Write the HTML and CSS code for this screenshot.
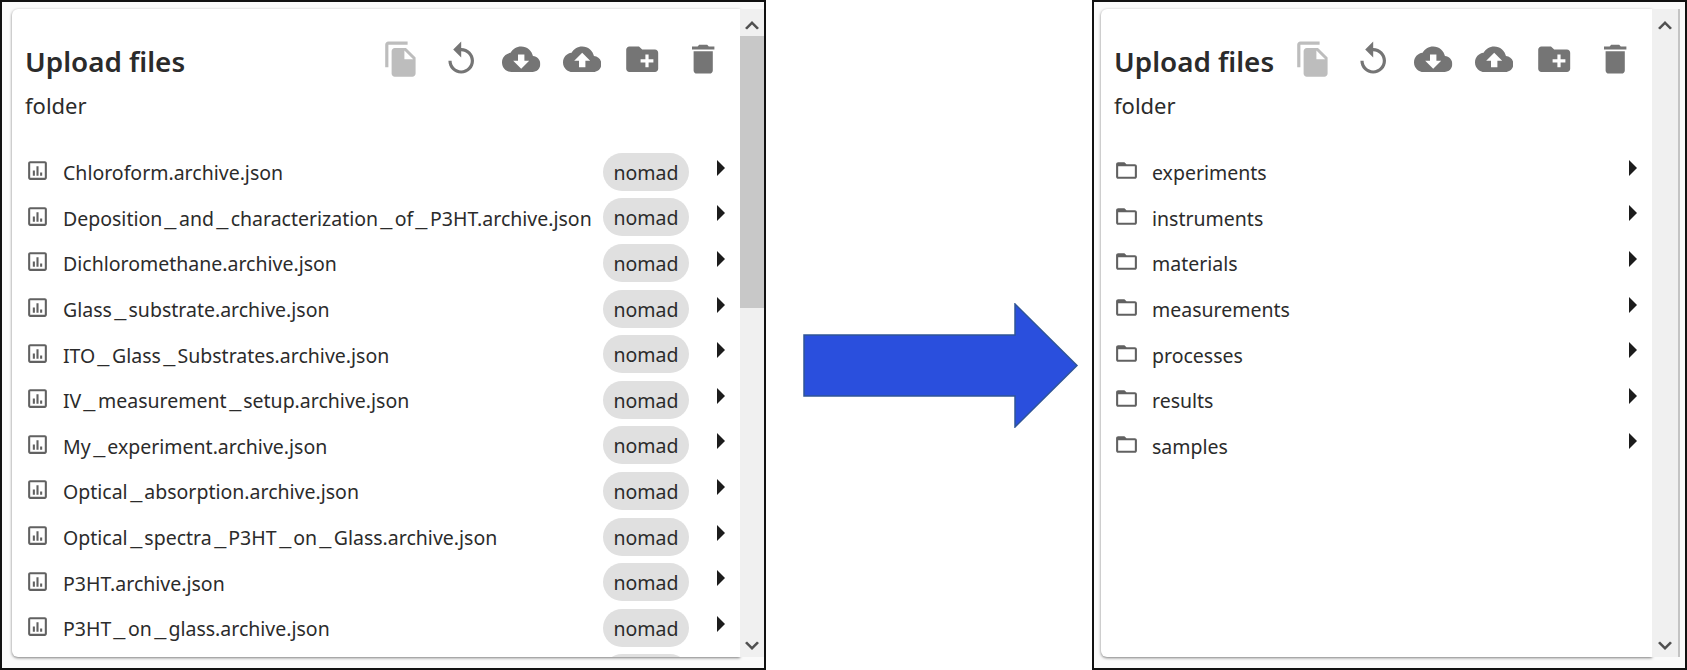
FILE: index.html
```html
<!DOCTYPE html>
<html lang="en">

<head>
    <meta charset="UTF-8">
    <title>Upload files</title>
    <link rel="stylesheet" href="styles.css">
</head>
<body>
    <svg class="sprites" width="0" height="0">
        <symbol id="i-copy" viewBox="0 0 24 24"><path d="M16 1H4c-1.1 0-2 .9-2 2v14h2V3h12V1zm-1 4l6 6v10c0 1.1-.9 2-2 2H7.99C6.89 23 6 22.1 6 21l.01-14c0-1.1.89-2 1.99-2h7zm-1 7h5.5L14 6.5V12z"/></symbol>
        <symbol id="i-replay" viewBox="0 0 24 24"><path d="M12 5V1L7 6l5 5V7c3.31 0 6 2.69 6 6s-2.69 6-6 6-6-2.69-6-6H4c0 4.42 3.58 8 8 8s8-3.58 8-8-3.58-8-8-8z"/></symbol>
        <symbol id="i-download" viewBox="0 0 24 24"><path d="M19.35 10.04C18.67 6.59 15.64 4 12 4 9.11 4 6.6 5.64 5.35 8.04 2.34 8.36 0 10.91 0 14c0 3.31 2.69 6 6 6h13c2.76 0 5-2.24 5-5 0-2.64-2.05-4.78-4.65-4.96zM17 13l-5 5-5-5h3V9h4v4h3z"/></symbol>
        <symbol id="i-upload" viewBox="0 0 24 24"><path d="M19.35 10.04C18.67 6.59 15.64 4 12 4 9.11 4 6.6 5.64 5.35 8.04 2.34 8.36 0 10.91 0 14c0 3.31 2.69 6 6 6h13c2.76 0 5-2.24 5-5 0-2.64-2.05-4.78-4.65-4.96zM14 13v4h-4v-4H7l5-5 5 5h-3z"/></symbol>
        <symbol id="i-newfolder" viewBox="0 0 24 24"><path d="M20 6h-8l-2-2H4c-1.11 0-1.99.89-1.99 2L2 18c0 1.11.89 2 2 2h16c1.11 0 2-.89 2-2V8c0-1.11-.89-2-2-2zm-1 8h-3v3h-2v-3h-3v-2h3V9h2v3h3v2z"/></symbol>
        <symbol id="i-delete" viewBox="0 0 24 24"><path d="M6 19c0 1.1.9 2 2 2h8c1.1 0 2-.9 2-2V7H6v12zM19 4h-3.5l-1-1h-5l-1 1H5v2h14V4z"/></symbol>
        <symbol id="i-chart" viewBox="0 0 24 24"><path d="M19 3H5c-1.1 0-2 .9-2 2v14c0 1.1.9 2 2 2h14c1.1 0 2-.9 2-2V5c0-1.1-.9-2-2-2zm0 16H5V5h14v14zM7.5 12h2v5h-2zM11 8h2v9h-2zM14.5 14h2v3h-2z"/></symbol>
        <symbol id="i-folder" viewBox="0 0 24 24"><path d="M20 6h-8l-2-2H4c-1.1 0-1.99.9-1.99 2L2 18c0 1.1.9 2 2 2h16c1.1 0 2-.9 2-2V8c0-1.1-.9-2-2-2zm0 12H4V8h16v10z"/></symbol>
        <symbol id="i-arrow" viewBox="0 0 8 16"><path d="M0 0l8 8-8 8z"/></symbol>
        <symbol id="i-up" viewBox="0 0 16 12"><path d="M1 9l7-7 7 7-2 1.5-5-5-5 5z"/></symbol>
        <symbol id="i-down" viewBox="0 0 16 12"><path d="M1 3l7 7 7-7-2-1.5-5 5-5-5z"/></symbol>
    </svg>

    <div class="frame frame-left">
        <div class="card">
            <div class="head">
                <h1>Upload files</h1>
                <div class="actions">
                    <svg class="action off"><use href="#i-copy"/></svg>
                    <svg class="action"><use href="#i-replay"/></svg>
                    <svg class="action"><use href="#i-download"/></svg>
                    <svg class="action"><use href="#i-upload"/></svg>
                    <svg class="action"><use href="#i-newfolder"/></svg>
                    <svg class="action"><use href="#i-delete"/></svg>
                </div>
            </div>
            <p class="path">folder</p>
            <ul class="list">
                <li class="row"><svg class="icon"><use href="#i-chart"/></svg><span class="name">Chloroform.archive.json</span><span class="chip">nomad</span><svg class="caret"><use href="#i-arrow"/></svg></li>
                <li class="row"><svg class="icon"><use href="#i-chart"/></svg><span class="name">Deposition<span class="us">_</span>and<span class="us">_</span>characterization<span class="us">_</span>of<span class="us">_</span>P3HT.archive.json</span><span class="chip">nomad</span><svg class="caret"><use href="#i-arrow"/></svg></li>
                <li class="row"><svg class="icon"><use href="#i-chart"/></svg><span class="name">Dichloromethane.archive.json</span><span class="chip">nomad</span><svg class="caret"><use href="#i-arrow"/></svg></li>
                <li class="row"><svg class="icon"><use href="#i-chart"/></svg><span class="name">Glass<span class="us">_</span>substrate.archive.json</span><span class="chip">nomad</span><svg class="caret"><use href="#i-arrow"/></svg></li>
                <li class="row"><svg class="icon"><use href="#i-chart"/></svg><span class="name">ITO<span class="us">_</span>Glass<span class="us">_</span>Substrates.archive.json</span><span class="chip">nomad</span><svg class="caret"><use href="#i-arrow"/></svg></li>
                <li class="row"><svg class="icon"><use href="#i-chart"/></svg><span class="name">IV<span class="us">_</span>measurement<span class="us">_</span>setup.archive.json</span><span class="chip">nomad</span><svg class="caret"><use href="#i-arrow"/></svg></li>
                <li class="row"><svg class="icon"><use href="#i-chart"/></svg><span class="name">My<span class="us">_</span>experiment.archive.json</span><span class="chip">nomad</span><svg class="caret"><use href="#i-arrow"/></svg></li>
                <li class="row"><svg class="icon"><use href="#i-chart"/></svg><span class="name">Optical<span class="us">_</span>absorption.archive.json</span><span class="chip">nomad</span><svg class="caret"><use href="#i-arrow"/></svg></li>
                <li class="row"><svg class="icon"><use href="#i-chart"/></svg><span class="name">Optical<span class="us">_</span>spectra<span class="us">_</span>P3HT<span class="us">_</span>on<span class="us">_</span>Glass.archive.json</span><span class="chip">nomad</span><svg class="caret"><use href="#i-arrow"/></svg></li>
                <li class="row"><svg class="icon"><use href="#i-chart"/></svg><span class="name">P3HT.archive.json</span><span class="chip">nomad</span><svg class="caret"><use href="#i-arrow"/></svg></li>
                <li class="row"><svg class="icon"><use href="#i-chart"/></svg><span class="name">P3HT<span class="us">_</span>on<span class="us">_</span>glass.archive.json</span><span class="chip">nomad</span><svg class="caret"><use href="#i-arrow"/></svg></li>
                <li class="row"><span class="name"></span><span class="chip"></span><svg class="caret"><use href="#i-arrow"/></svg></li>
            </ul>
        </div>
        <div class="scrollbar">
            <svg class="chevron"><use href="#i-up"/></svg>
            <div class="thumb"></div>
            <svg class="chevron chevron-down"><use href="#i-down"/></svg>
        </div>
    </div>

    <svg class="big-arrow" viewBox="0 0 276 125">
        <path d="M1 32H212V1L274 62.5 212 124V93H1z"/>
    </svg>

    <div class="frame frame-right">
        <div class="card">
            <div class="head">
                <h1>Upload files</h1>
                <div class="actions">
                    <svg class="action off"><use href="#i-copy"/></svg>
                    <svg class="action"><use href="#i-replay"/></svg>
                    <svg class="action"><use href="#i-download"/></svg>
                    <svg class="action"><use href="#i-upload"/></svg>
                    <svg class="action"><use href="#i-newfolder"/></svg>
                    <svg class="action"><use href="#i-delete"/></svg>
                </div>
            </div>
            <p class="path">folder</p>
            <ul class="list">
                <li class="row"><svg class="icon"><use href="#i-folder"/></svg><span class="name">experiments</span><svg class="caret"><use href="#i-arrow"/></svg></li>
                <li class="row"><svg class="icon"><use href="#i-folder"/></svg><span class="name">instruments</span><svg class="caret"><use href="#i-arrow"/></svg></li>
                <li class="row"><svg class="icon"><use href="#i-folder"/></svg><span class="name">materials</span><svg class="caret"><use href="#i-arrow"/></svg></li>
                <li class="row"><svg class="icon"><use href="#i-folder"/></svg><span class="name">measurements</span><svg class="caret"><use href="#i-arrow"/></svg></li>
                <li class="row"><svg class="icon"><use href="#i-folder"/></svg><span class="name">processes</span><svg class="caret"><use href="#i-arrow"/></svg></li>
                <li class="row"><svg class="icon"><use href="#i-folder"/></svg><span class="name">results</span><svg class="caret"><use href="#i-arrow"/></svg></li>
                <li class="row"><svg class="icon"><use href="#i-folder"/></svg><span class="name">samples</span><svg class="caret"><use href="#i-arrow"/></svg></li>
            </ul>
        </div>
        <div class="scrollbar">
            <svg class="chevron"><use href="#i-up"/></svg>
            <svg class="chevron chevron-down"><use href="#i-down"/></svg>
        </div>
    </div>
</body>

</html>
```

FILE: styles.css
```css
* {
    box-sizing: border-box;
}

body {
    margin: 0;
    height: 670px;
    display: flex;
    align-items: stretch;
    background-color: #fff;
    font-family: "Noto Sans", sans-serif;
    color: #2b2b2b;
    overflow: hidden;
}

.sprites {
    position: absolute;
}

.frame {
    display: flex;
    flex: none;
    border: 2px solid #111;
    background-color: #fafafa;
    padding-top: 7px;
    padding-bottom: 11px;
}

.frame-left {
    width: 766px;
    padding-left: 10px;
}

.frame-right {
    width: 595px;
    padding-left: 7px;
    padding-right: 5px;
}

.big-arrow {
    flex: none;
    width: 276px;
    height: 125px;
    margin: 303px 13px 0 37px;
    fill: #2a4fdd;
    stroke: #2f5597;
    stroke-width: 1.5;
}

.card {
    flex: 1;
    min-width: 0;
    background-color: #fff;
    border-radius: 6px 0 0 6px;
    box-shadow: 0 1px 3px rgba(0, 0, 0, 0.5);
    overflow: hidden;
}

.head {
    display: flex;
    align-items: flex-start;
    padding: 31px 0 0 13px;
    height: 69px;
}

h1 {
    margin: 2px 0 0;
    font-size: 27.8px;
    font-weight: 600;
    line-height: 38px;
}

.actions {
    display: flex;
    margin-left: auto;
    padding-right: 18px;
    gap: 22px;
}

.action {
    width: 38.4px;
    height: 38.4px;
    fill: #757575;
}

.action.off {
    fill: #bdbdbd;
}

.path {
    margin: 13px 0 0 13px;
    font-size: 22px;
    line-height: 28px;
}

.list {
    list-style: none;
    margin: 30px 0 0;
    padding: 0 0 0 13px;
}

.row {
    display: flex;
    align-items: center;
    height: 45.6px;
    font-size: 19.5px;
}

.icon {
    width: 25px;
    height: 25px;
    margin-right: 13px;
    fill: #616161;
    flex: none;
    position: relative;
    top: -1px;
}

.name {
    flex: 1;
    white-space: nowrap;
    padding-top: 2px;
}

/* the original font has a much longer underscore */
.us {
    display: inline-block;
    padding: 0 4px;
    transform: scaleX(1.4);
}

.chip {
    flex: none;
    width: 86px;
    height: 38px;
    line-height: 40px;
    text-align: center;
    border-radius: 19px;
    background-color: #e0e0e0;
    margin-right: 28px;
}

.caret {
    width: 8px;
    height: 16px;
    fill: #1c1c1c;
    flex: none;
    margin-right: 15px;
    position: relative;
    top: -4px;
}

.scrollbar {
    width: 24px;
    flex: none;
    display: flex;
    flex-direction: column;
    align-items: center;
    background-color: #f0f0f0;
}

.frame-right .scrollbar {
    border-right: 2px solid #c4c4c4;
    width: 28px;
}

.chevron {
    width: 16px;
    height: 12px;
    margin: 10px 0 5px;
    fill: #505050;
    flex: none;
}

.chevron-down {
    margin: auto 0 5px;
}

.thumb {
    width: 100%;
    height: 272px;
    background-color: #c8c8c8;
}
```
